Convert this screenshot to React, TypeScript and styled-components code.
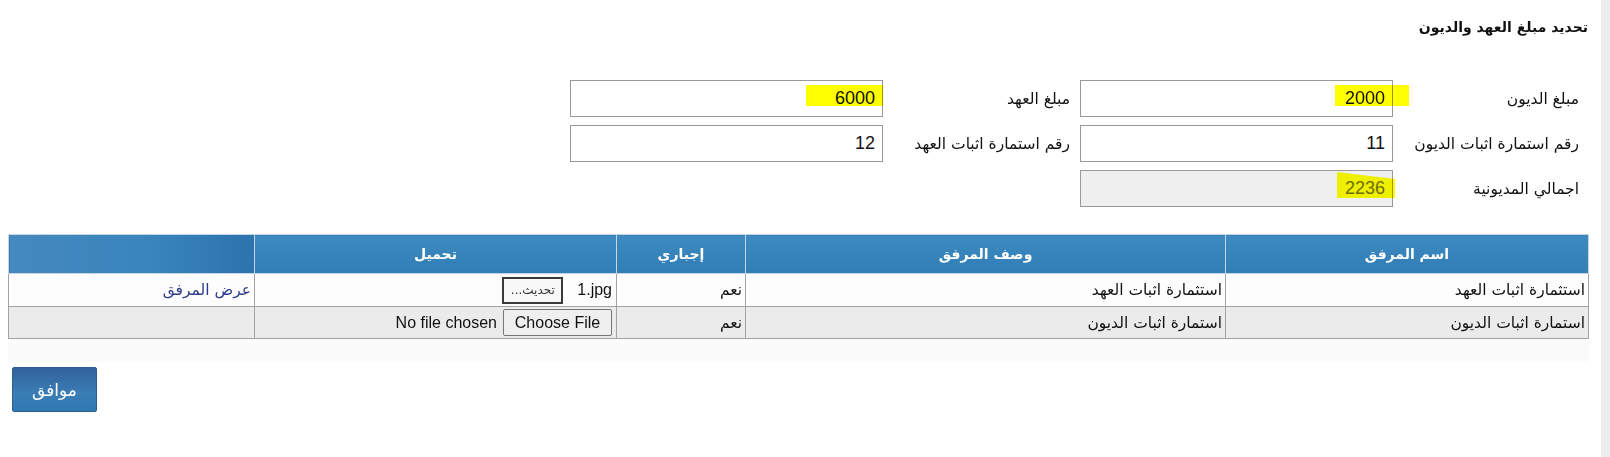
import styled, { createGlobalStyle } from 'styled-components';

interface Attachment {
  id: string;
  name: string;
  description: string;
  required: string;
  file?: string;
}

const attachments: Attachment[] = [
  {
    id: 'a1',
    name: 'استثمارة اثبات العهد',
    description: 'استثمارة اثبات العهد',
    required: 'نعم',
    file: '1.jpg',
  },
  {
    id: 'a2',
    name: 'استمارة اثبات الديون',
    description: 'استمارة اثبات الديون',
    required: 'نعم',
  },
];

export default function App() {
  return (
    <Page>
      <GlobalStyle />
      <Main dir="rtl">
        <Title>تحديد مبلغ العهد والديون</Title>

        <FormGrid>
          <Label>مبلغ الديون</Label>
          <Field>
            2000
            <Marker $right={-17} $width={74} $top={4} $height={21} />
          </Field>
          <Label>مبلغ العهد</Label>
          <Field>
            6000
            <Marker $right={-1} $width={77} $top={4} $height={21} />
          </Field>

          <Label>رقم استمارة اثبات الديون</Label>
          <Field>11</Field>
          <Label>رقم استمارة اثبات العهد</Label>
          <Field>12</Field>

          <Label>اجمالي المديونية</Label>
          <Field $disabled>
            2236
            <Marker $right={-3} $width={58} $top={1} $height={26} $slant />
          </Field>
        </FormGrid>

        <Grid>
          <colgroup>
            <col style={{ width: 363 }} />
            <col style={{ width: 480 }} />
            <col style={{ width: 129 }} />
            <col style={{ width: 362 }} />
            <col style={{ width: 246 }} />
          </colgroup>
          <thead>
            <tr>
              <HeadCell>اسم المرفق</HeadCell>
              <HeadCell>وصف المرفق</HeadCell>
              <HeadCell>إجباري</HeadCell>
              <HeadCell>تحميل</HeadCell>
              <HeadCell $shade />
            </tr>
          </thead>
          <tbody>
            {attachments.map((a, i) => (
              <Row key={a.id} $alt={i % 2 === 1}>
                <Cell $h={i === 0 ? 33 : 32}>{a.name}</Cell>
                <Cell $h={i === 0 ? 33 : 32}>{a.description}</Cell>
                <Cell $h={i === 0 ? 33 : 32}>{a.required}</Cell>
                <Cell $h={i === 0 ? 33 : 32}>
                  {a.file ? (
                    <FileBox $gap={14}>
                      <FileName>{a.file}</FileName>
                      <UpdateButton>تحديث...</UpdateButton>
                    </FileBox>
                  ) : (
                    <FileBox $gap={6}>
                      <ChooseButton>Choose File</ChooseButton>
                      <FileName>No file chosen</FileName>
                    </FileBox>
                  )}
                </Cell>
                <Cell $h={i === 0 ? 33 : 32}>
                  {a.file && <ViewLink href="#">عرض المرفق</ViewLink>}
                </Cell>
              </Row>
            ))}
          </tbody>
        </Grid>
        <FooterBand />

        <Actions>
          <SubmitButton>موافق</SubmitButton>
        </Actions>
      </Main>
      <ScrollTrack />
    </Page>
  );
}

// Styled Components

const GlobalStyle = createGlobalStyle`
  html, body {
    margin: 0;
    padding: 0;
    background: #fff;
  }
  body {
    font-family: "Liberation Sans", "DejaVu Sans", sans-serif;
    color: #111;
  }
`;

const Page = styled.div`
  display: flex;
  min-height: 457px;
`;

const Main = styled.div`
  flex: 1;
  padding: 0 12px 0 8px;
  font-family: "DejaVu Sans", sans-serif;
`;

const ScrollTrack = styled.div`
  width: 10px;
  background: #ededed;
`;

const Title = styled.h3`
  margin: 0;
  padding: 17px 1px 0 0;
  height: 20px;
  line-height: 20px;
  font-size: 14px;
  font-weight: bold;
  color: #111;
`;

const FormGrid = styled.div`
  display: grid;
  grid-template-columns: 196px 313px 197px 313px;
  grid-auto-rows: 37px;
  row-gap: 8px;
  justify-content: start;
  margin-top: 43px;
`;

const Label = styled.div`
  display: flex;
  align-items: center;
  padding-right: 10px;
  font-size: 15.5px;
  color: #111;
`;

const Field = styled.div<{ $disabled?: boolean }>`
  position: relative;
  display: flex;
  align-items: center;
  box-sizing: border-box;
  padding: 0 7px;
  border: 1px solid #999;
  background: ${({ $disabled }) => ($disabled ? '#efefef' : '#fff')};
  color: ${({ $disabled }) => ($disabled ? '#6d6d6d' : '#111')};
  font-family: "Liberation Sans", sans-serif;
  font-size: 18px;
`;

const Marker = styled.span<{
  $right: number;
  $width: number;
  $top: number;
  $height: number;
  $slant?: boolean;
}>`
  position: absolute;
  right: ${({ $right }) => $right}px;
  top: ${({ $top }) => $top}px;
  width: ${({ $width }) => $width}px;
  height: ${({ $height }) => $height}px;
  background: #ffff00;
  mix-blend-mode: multiply;
  clip-path: ${({ $slant }) =>
    $slant ? 'polygon(0 0, 100% 7px, 100% 100%, 0 100%)' : 'none'};
`;

const Grid = styled.table`
  width: 100%;
  margin-top: 27px;
  border-collapse: collapse;
  table-layout: fixed;
`;

const HeadCell = styled.th<{ $shade?: boolean }>`
  height: 38px;
  padding: 0;
  border: 1px solid #c8d5e1;
  background: ${({ $shade }) =>
    $shade
      ? 'linear-gradient(to left, #2d73ae, #3985bc 45%, #4589bf)'
      : 'linear-gradient(#3d8ac1, #317eb6)'};
  color: #fff;
  font-size: 14px;
  font-weight: bold;
  text-align: center;
`;

const Row = styled.tr<{ $alt?: boolean }>`
  background: ${({ $alt }) => ($alt ? '#ebebeb' : '#fdfdfd')};
`;

const Cell = styled.td<{ $h: number }>`
  height: ${({ $h }) => $h}px;
  box-sizing: border-box;
  padding: 0 3px;
  border: 1px solid #a3a3a3;
  text-align: right;
  font-size: 15.5px;
  color: #111;
`;

const FileBox = styled.div<{ $gap: number }>`
  display: flex;
  align-items: center;
  gap: ${({ $gap }) => $gap}px;
  padding-right: 1px;
`;

const FileName = styled.span`
  direction: ltr;
  unicode-bidi: isolate;
  font-family: "Liberation Sans", sans-serif;
  font-size: 16px;
`;

const UpdateButton = styled.button`
  width: 61px;
  height: 27px;
  padding: 0;
  border: 2px solid #3a3a3a;
  background: #f8f8f8;
  color: #333;
  font-family: "DejaVu Sans", sans-serif;
  font-size: 12px;
`;

const ChooseButton = styled.button`
  width: 109px;
  height: 27px;
  padding: 0;
  border: 1px solid #767676;
  border-radius: 2px;
  background: #efefef;
  color: #111;
  font-family: "Liberation Sans", sans-serif;
  font-size: 16px;
`;

const ViewLink = styled.a`
  color: #2e3a8c;
  text-decoration: none;
`;

const FooterBand = styled.div`
  height: 23px;
  background: #fbfbfb;
`;

const Actions = styled.div`
  display: flex;
  justify-content: flex-end;
  margin-top: 5px;
  padding-left: 4px;
`;

const SubmitButton = styled.button`
  width: 85px;
  height: 45px;
  border: 1px solid #2c5f93;
  border-radius: 2px;
  background: linear-gradient(#33619b, #3a7db5 60%, #2f78b1);
  color: #fff;
  font-family: "DejaVu Sans", sans-serif;
  font-size: 17px;
`;
